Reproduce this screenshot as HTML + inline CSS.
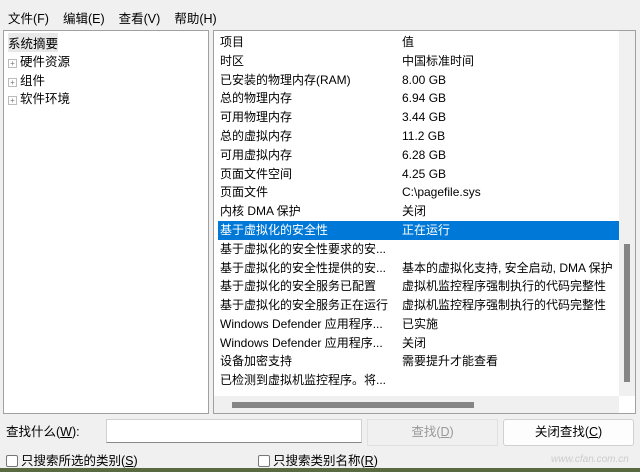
<!DOCTYPE html>
<html><head><meta charset="utf-8"><style>
*{margin:0;padding:0;box-sizing:border-box}
body{width:640px;height:472px;overflow:hidden;background:#5a6a40;font-family:"Liberation Sans","Noto Sans CJK SC",sans-serif;font-size:12px;color:#000}
.win{position:absolute;left:0;top:0;width:640px;height:468px;background:#f0f0f0}
.menu{position:absolute;top:8px;left:8px;font-size:12.5px}
.menu span{margin-right:14px}
.lp{position:absolute;left:3px;top:30px;width:206px;height:384px;background:#fff;border:1px solid #a0a0a0}
.rp{position:absolute;left:213px;top:30px;width:423px;height:384px;background:#fff;border:1px solid #a0a0a0}
.t{position:absolute;left:4px;white-space:nowrap;font-size:12.5px}
.row{position:absolute;left:4px;width:401px;height:19px;line-height:19px;white-space:nowrap;overflow:hidden}
.row .a{position:absolute;left:2px}
.row .b{position:absolute;left:184px}
.sel{background:#0078d7;color:#fff}
.vs{position:absolute;left:405px;top:0;width:16px;height:365px;background:#f0f0f0}
.vt{position:absolute;left:5px;top:213px;width:6px;height:138px;background:#858585}
.hs{position:absolute;left:0;top:365px;width:405px;height:17px;background:#f0f0f0}
.ht{position:absolute;left:18px;top:6px;width:242px;height:6px;background:#858585}
.pl{display:inline-block;width:9px;height:9px;border:1px solid #bbb;position:relative;top:0px;margin-right:3px;font-size:8px;line-height:7px;text-align:center;color:#777}
.box{position:absolute;border:1px solid #ccc;background:#fff}
.cb{display:inline-block;width:12px;height:12px;border:1px solid #777;border-radius:2px;background:#fff;vertical-align:-2px;margin-right:3px}
</style></head><body><div class="win">
<div class="menu"><span>文件(F)</span><span>编辑(E)</span><span>查看(V)</span><span>帮助(H)</span></div>
<div class="lp">
<div class="t" style="top:2px;left:4px;background:#e8e8e8">系统摘要</div>
<div class="t" style="top:20px"><span class="pl">+</span>硬件资源</div>
<div class="t" style="top:39px"><span class="pl">+</span>组件</div>
<div class="t" style="top:57px"><span class="pl">+</span>软件环境</div>
</div>
<div class="rp">
<div class="row" style="top:2px"><span class="a">项目</span><span class="b">值</span></div>
<div class="row" style="top:21px"><span class="a">时区</span><span class="b">中国标准时间</span></div>
<div class="row" style="top:40px"><span class="a">已安装的物理内存(RAM)</span><span class="b">8.00 GB</span></div>
<div class="row" style="top:58px"><span class="a">总的物理内存</span><span class="b">6.94 GB</span></div>
<div class="row" style="top:77px"><span class="a">可用物理内存</span><span class="b">3.44 GB</span></div>
<div class="row" style="top:96px"><span class="a">总的虚拟内存</span><span class="b">11.2 GB</span></div>
<div class="row" style="top:115px"><span class="a">可用虚拟内存</span><span class="b">6.28 GB</span></div>
<div class="row" style="top:134px"><span class="a">页面文件空间</span><span class="b">4.25 GB</span></div>
<div class="row" style="top:152px"><span class="a">页面文件</span><span class="b">C:\pagefile.sys</span></div>
<div class="row" style="top:171px"><span class="a">内核 DMA 保护</span><span class="b">关闭</span></div>
<div class="row sel" style="top:190px"><span class="a">基于虚拟化的安全性</span><span class="b">正在运行</span></div>
<div class="row" style="top:209px"><span class="a">基于虚拟化的安全性要求的安...</span></div>
<div class="row" style="top:228px"><span class="a">基于虚拟化的安全性提供的安...</span><span class="b">基本的虚拟化支持, 安全启动, DMA 保护</span></div>
<div class="row" style="top:246px"><span class="a">基于虚拟化的安全服务已配置</span><span class="b">虚拟机监控程序强制执行的代码完整性</span></div>
<div class="row" style="top:265px"><span class="a">基于虚拟化的安全服务正在运行</span><span class="b">虚拟机监控程序强制执行的代码完整性</span></div>
<div class="row" style="top:284px"><span class="a">Windows Defender 应用程序...</span><span class="b">已实施</span></div>
<div class="row" style="top:303px"><span class="a">Windows Defender 应用程序...</span><span class="b">关闭</span></div>
<div class="row" style="top:321px"><span class="a">设备加密支持</span><span class="b">需要提升才能查看</span></div>
<div class="row" style="top:340px"><span class="a">已检测到虚拟机监控程序。将...</span></div>
<div class="vs"><div class="vt"></div></div>
<div class="hs"><div class="ht"></div></div>
</div>
<div style="position:absolute;left:6px;top:421px;font-size:12.5px">查找什么(<u>W</u>):</div>
<div class="box" style="left:106px;top:419px;width:256px;height:24px;border-color:#d0d0d0;border-bottom-color:#888"></div>
<div class="box" style="left:367px;top:419px;width:131px;height:27px;background:#f0f0f0;border-color:#e0e0e0;color:#999;text-align:center;line-height:25px;font-size:12.5px">查找(<u>D</u>)</div>
<div class="box" style="left:503px;top:419px;width:131px;height:27px;background:#fdfdfd;border-color:#d0d0d0;border-radius:3px;text-align:center;line-height:25px;font-size:12.5px">关闭查找(<u>C</u>)</div>
<div style="position:absolute;left:6px;top:450px;font-size:12.5px"><span class="cb"></span>只搜索所选的类别(<u>S</u>)</div>
<div style="position:absolute;left:258px;top:450px;font-size:12.5px"><span class="cb"></span>只搜索类别名称(<u>R</u>)</div>
<div style="position:absolute;left:551px;top:454px;font-size:10px;font-style:italic;color:#ccc">www.cfan.com.cn</div>
</div></body></html>
